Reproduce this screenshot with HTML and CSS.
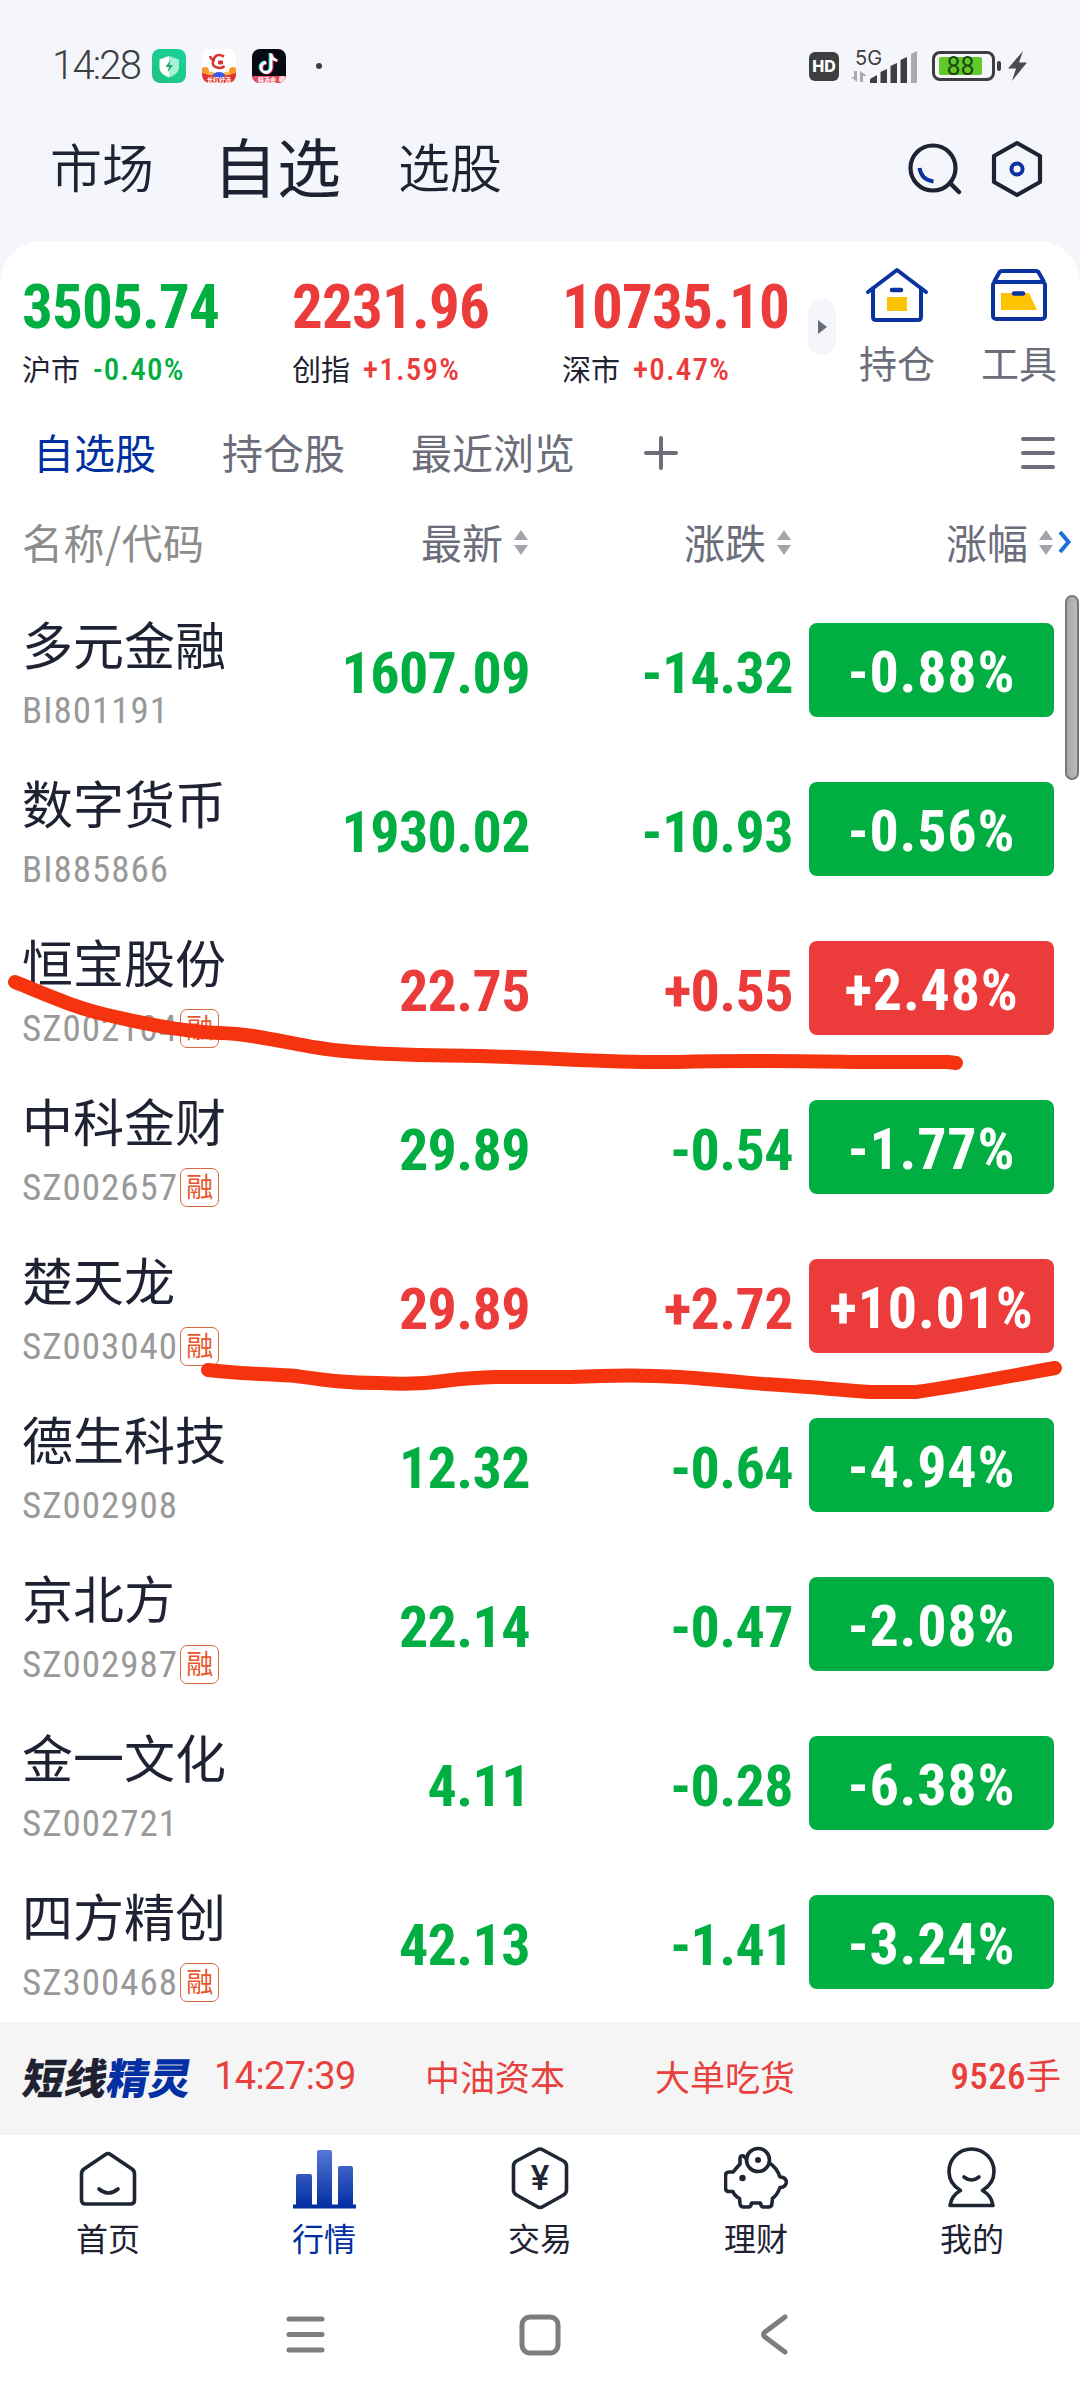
FILE: index.html
```
<!DOCTYPE html>
<html lang="zh-CN">

<head>
  <meta charset="UTF-8" />
  <meta name="viewport" content="width=device-width, initial-scale=1.0" />
  <title>自选股</title>
  <link rel="stylesheet" href="styles.css">
</head>

<body>
  <div class="status-bar">
    <span class="clock">14:28</span>
    <div class="app-icons">
      <svg width="34" height="34" viewBox="0 0 34 34">
        <defs>
          <linearGradient id="shieldBg" x1="0" y1="1" x2="1" y2="0">
            <stop offset="0" stop-color="#22c184" />
            <stop offset="1" stop-color="#17d49a" />
          </linearGradient>
        </defs>
        <rect width="34" height="34" rx="8" fill="url(#shieldBg)" />
        <path d="M17 7l10 3.500v8c0 5-5 8-10 10z" fill="#a5f3d3" />
        <path d="M17 7L7.500 10.500v8c0 5 4.500 8 9.500 10z" fill="#fff" />
        <path d="M18.500 11l-5 7h3.500l-1.500 5.500 5.500-7.500h-3.500z" fill="#1fa873" />
      </svg>
      <svg width="34" height="34" viewBox="0 0 34 34">
        <clipPath id="appClip"><rect width="34" height="34" rx="8" /></clipPath>
        <g clip-path="url(#appClip)">
          <rect width="34" height="34" fill="#fff" />
          <circle cx="3" cy="22" r="4" fill="#f79a2b" />
          <circle cx="31" cy="22" r="4" fill="#f79a2b" />
          <circle cx="9" cy="26" r="3.500" fill="#f9b64c" />
          <circle cx="25" cy="26" r="3.500" fill="#f9b64c" />
          <path d="M0 24q8 3 17 3t17-3v10H0z" fill="#e0352f" />
          <ellipse cx="17" cy="26" rx="6" ry="3" fill="#3b5be0" />
          <path d="M22 7.500q-8-4-10.500 3t4 8q4 1.500 7-1.500M8 7q1 4 5 4" fill="none" stroke="#d6372d" stroke-width="2.600" />
          <rect x="16" y="11.500" width="5" height="4" rx="1" fill="#d6372d" />
        </g>
        <text x="17" y="33" class="mini-label">长红好选</text>
      </svg>
      <svg width="34" height="34" viewBox="0 0 34 34">
        <g clip-path="url(#appClip)">
          <rect width="34" height="34" fill="#070914" />
          <g fill="none" stroke-width="2.800">
            <path d="M18 4v14a5 5 0 1 1-5-5M18 5q1 5 6 6" stroke="#25e5e0" />
            <path d="M20 5v14a5 5 0 1 1-5-5M20 6q1 5 6 6" stroke="#f2345f" />
            <path d="M19 4.500v14a5 5 0 1 1-5-5M19 5.500q1 5 6 6" stroke="#fff" />
          </g>
          <rect y="27" width="34" height="7" fill="#ea4a63" />
          <rect x="27" y="27" width="7" height="7" rx="3" fill="#ffd9cf" />
        </g>
        <text x="15" y="33" class="mini-label">精选会</text>
      </svg>
    </div>
    <span class="dot"></span>

    <div class="status-right">
      <span class="hd">HD</span>
      <svg class="signal" width="70" height="46" viewBox="0 -5 70 46">
        <text x="4" y="17" class="net">5G</text>
        <path d="M6 23v11l-6-5h3v-6zM9 34V23l7 5h-4v6z" fill="#a9abae" />
        <g fill="#3d3e40">
          <path d="M19 35v-4l7-4v8z" />
          <path d="M29.500 35V24l6.500-3v14z" />
          <path d="M39.500 35V18l6.500-3v20z" />
          <path d="M49.500 35V12l6.500-3v26z" />
        </g>
        <path d="M60 35V6l6-3v32z" fill="#a9abae" />
      </svg>
      <span class="battery"><span class="battery-fill">88</span></span>
      <span class="battery-nub"></span>
      <svg class="bolt" width="20" height="30" viewBox="0 0 20 30">
        <path d="M15 0L0 17.500h8L4 30l15-18.500h-8z" fill="#4a4b4e" />
      </svg>
    </div>
  </div>

  <header class="top-nav">
    <span class="nav-item">市场</span>
    <span class="nav-item active">自选</span>
    <span class="nav-item">选股</span>
    <div class="nav-icons">
      <svg width="56" height="60" viewBox="0 0 56 60" fill="none">
        <circle cx="26" cy="29" r="22.500" stroke="#1e2233" stroke-width="4.200" />
        <path d="M43 44l9 9" stroke="#1e2233" stroke-width="4.500" stroke-linecap="round" />
        <path d="M12.500 29q2 12 14 13.500" stroke="#0a33a0" stroke-width="4" />
      </svg>
      <svg width="56" height="60" viewBox="0 0 56 60" fill="none">
        <path d="M28 4l23 13v26L28 56 5 43V17z" stroke="#1e2233" stroke-width="4.200" stroke-linejoin="round" />
        <circle cx="28" cy="30" r="5.600" stroke="#0a33a0" stroke-width="4" />
      </svg>
    </div>
  </header>

  <main class="panel">
    <section class="indices">
      <div class="index green">
        <div class="index-value">3505.74</div>
        <div class="index-sub"><span class="index-name">沪市</span><span class="index-pct">-0.40%</span></div>
      </div>
      <div class="index red">
        <div class="index-value">2231.96</div>
        <div class="index-sub"><span class="index-name">创指</span><span class="index-pct">+1.59%</span></div>
      </div>
      <div class="index red">
        <div class="index-value">10735.10</div>
        <div class="index-sub"><span class="index-name">深市</span><span class="index-pct">+0.47%</span></div>
      </div>
      <div class="expand">
        <svg width="9" height="14" viewBox="0 0 9 14"><path d="M0 0l9 7-9 7z" fill="#6b6e7a" /></svg>
      </div>
      <div class="tool">
        <svg width="64" height="56" viewBox="0 0 64 56" fill="none">
          <path d="M3 26L32 4l29 22M8 22v29q0 3 3 3h42q3 0 3-3V22" stroke="#0a33a0" stroke-width="4" stroke-linecap="round" stroke-linejoin="round" />
          <rect x="22" y="31" width="20" height="14" fill="#ffc400" />
          <path d="M27 24h9" stroke="#0a33a0" stroke-width="4.500" stroke-linecap="round" />
        </svg>
        <span>持仓</span>
      </div>
      <div class="tool">
        <svg width="64" height="56" viewBox="0 0 64 56" fill="none">
          <rect x="6" y="16" width="52" height="37" rx="3" stroke="#0a33a0" stroke-width="4" />
          <path d="M7 16l5-9q1-2 3-2h34q2 0 3 2l5 9" stroke="#0a33a0" stroke-width="4" />
          <path d="M14 27h28l8 17H14z" fill="#ffc400" />
          <path d="M27 27.500h9" stroke="#0a33a0" stroke-width="4.500" stroke-linecap="round" />
        </svg>
        <span>工具</span>
      </div>
    </section>

    <nav class="tabs">
      <span class="tab active">自选股</span>
      <span class="tab">持仓股</span>
      <span class="tab">最近浏览</span>
      <svg class="add" width="34" height="34" viewBox="0 0 34 34">
        <path d="M2 17h30M17 2v30" stroke="#6b6e7a" stroke-width="4" stroke-linecap="round" />
      </svg>
      <svg class="menu" width="34" height="34" viewBox="0 0 34 34">
        <path d="M2 3h30M2 17h30M2 31h30" stroke="#6b6e7a" stroke-width="4" stroke-linecap="round" />
      </svg>
    </nav>

    <div class="table-head">
      <span class="th-name">名称/代码</span>
      <span class="th">最新<i class="sort"></i></span>
      <span class="th">涨跌<i class="sort"></i></span>
      <span class="th">涨幅<i class="sort"></i></span>
      <svg class="more" width="14" height="22" viewBox="0 0 14 22">
        <path d="M2 1l8.500 10L2 21" fill="none" stroke="#1b6fe0" stroke-width="4" />
      </svg>
    </div>

    <section class="stocks">
      <div class="row green">
        <div class="stock"><div class="name">多元金融</div><div class="code">BI801191</div></div>
        <div class="num">1607.09</div><div class="num">-14.32</div><div class="pct">-0.88%</div>
      </div>
      <div class="row green">
        <div class="stock"><div class="name">数字货币</div><div class="code">BI885866</div></div>
        <div class="num">1930.02</div><div class="num">-10.93</div><div class="pct">-0.56%</div>
      </div>
      <div class="row red">
        <div class="stock"><div class="name">恒宝股份</div><div class="code">SZ002104<span class="margin">融</span></div></div>
        <div class="num">22.75</div><div class="num">+0.55</div><div class="pct">+2.48%</div>
      </div>
      <div class="row green">
        <div class="stock"><div class="name">中科金财</div><div class="code">SZ002657<span class="margin">融</span></div></div>
        <div class="num">29.89</div><div class="num">-0.54</div><div class="pct">-1.77%</div>
      </div>
      <div class="row red">
        <div class="stock"><div class="name">楚天龙</div><div class="code">SZ003040<span class="margin">融</span></div></div>
        <div class="num">29.89</div><div class="num">+2.72</div><div class="pct">+10.01%</div>
      </div>
      <div class="row green">
        <div class="stock"><div class="name">德生科技</div><div class="code">SZ002908</div></div>
        <div class="num">12.32</div><div class="num">-0.64</div><div class="pct">-4.94%</div>
      </div>
      <div class="row green">
        <div class="stock"><div class="name">京北方</div><div class="code">SZ002987<span class="margin">融</span></div></div>
        <div class="num">22.14</div><div class="num">-0.47</div><div class="pct">-2.08%</div>
      </div>
      <div class="row green">
        <div class="stock"><div class="name">金一文化</div><div class="code">SZ002721</div></div>
        <div class="num">4.11</div><div class="num">-0.28</div><div class="pct">-6.38%</div>
      </div>
      <div class="row green">
        <div class="stock"><div class="name">四方精创</div><div class="code">SZ300468<span class="margin">融</span></div></div>
        <div class="num">42.13</div><div class="num">-1.41</div><div class="pct">-3.24%</div>
      </div>
      <div class="scrollbar"></div>
    </section>
  </main>

  <div class="ticker">
    <span class="ticker-logo">短线<b>精灵</b></span>
    <span class="ticker-time">14:27:39</span>
    <span class="ticker-stock">中油资本</span>
    <span class="ticker-event">大单吃货</span>
    <span class="ticker-vol"><em>9526</em>手</span>
  </div>

  <nav class="tab-bar">
    <div class="bar-item">
      <svg width="64" height="64" viewBox="0 0 64 64">
        <path d="M29.500 8.500q2.500-2 5 0L56 23q2.500 2 2.500 5v26q0 4-4 4h-45q-4 0-4-4V28q0-3 2.500-5z" />
        <path d="M23 43q9.500 8 19 0" />
      </svg>
      <span>首页</span>
    </div>
    <div class="bar-item active">
      <svg width="64" height="64" viewBox="0 0 64 64" class="solid">
        <defs>
          <linearGradient id="bars" gradientUnits="userSpaceOnUse" x1="0" y1="4" x2="0" y2="60">
            <stop offset="0" stop-color="#5577d6" />
            <stop offset="1" stop-color="#0530a3" />
          </linearGradient>
        </defs>
        <path d="M4 60V30q0-2 2-2h12q2 0 2 2v30zM25 60V6q0-2 2-2h11q2 0 2 2v54zM46 60V22q0-2 2-2h11q2 0 2 2v38z" fill="url(#bars)" />
        <rect x="1" y="58.500" width="63" height="4" fill="#0530a3" />
      </svg>
      <span>行情</span>
    </div>
    <div class="bar-item">
      <svg width="64" height="64" viewBox="0 0 64 64">
        <path d="M29 4q3-2 6 0l20.500 11q3 2 3 5v24q0 3-3 5L35 60.500q-3 2-6 0L8.500 49q-3-2-3-5V20q0-3 3-5z" />
        <text x="32" y="44" class="yuan">¥</text>
      </svg>
      <span>交易</span>
    </div>
    <div class="bar-item">
      <svg width="64" height="64" viewBox="0 0 64 64">
        <circle cx="34" cy="14" r="11.500" />
        <circle cx="34" cy="14" r="2" class="ink" />
        <circle cx="18.500" cy="32" r="2.200" class="ink" />
        <path d="M22.500 13l-3-3q-3-1-3.500 2v6L9 26H5q-3.500 0-3.500 4v12q0 3.500 3.500 3.500h4q1 4 6.500 7l.5 5q.5 3.500 3.500 3.500h5q2.500 0 3-4h9q.5 4 3 4h5q3.500 0 3.500-4l.5-4.500q5-4 7.500-11 5.500 0 6.500-5.500-1-5-6.500-5-3-9-10.500-14" />
      </svg>
      <span>理财</span>
    </div>
    <div class="bar-item">
      <svg width="64" height="64" viewBox="0 0 64 64">
        <path d="M20.500 44.500q-11.500-7-11.500-19a22.500 22.500 0 0 1 45 0Q54 37.500 42.500 44.500q9 5 10.500 15H10q1.500-10 10.500-15z" />
        <path d="M24 31q7.500 6 15 0" />
      </svg>
      <span>我的</span>
    </div>
  </nav>

  <footer class="sys-nav">
    <svg width="42" height="42" viewBox="0 0 42 42"><path d="M4 5h33M4 20.500h33M4 36h33" /></svg>
    <svg width="42" height="42" viewBox="0 0 42 42"><rect x="3" y="3" width="36" height="36" rx="8" /></svg>
    <svg width="42" height="42" viewBox="0 0 42 42"><path d="M32 3L12 18q-3 2.500 0 5l20 15" /></svg>
  </footer>

  <!-- hand-drawn marks over the list -->
  <svg class="marks" width="1080" height="2400" viewBox="0 0 1080 2400">
    <path d="M15 982C50 996 80 1010 116 1017C150 1025 185 1032 220 1033C265 1034 300 1048 344 1051C400 1056 430 1055 480 1056C560 1058 610 1063 678 1062C740 1060 790 1061 860 1062L948 1062L956 1063" />
    <path d="M208 1370C240 1374 270 1374 296 1376C325 1380 345 1383 379 1383C440 1386 440 1378 496 1377L571 1377C610 1375 650 1375 680 1377C710 1379 740 1382 764 1384C800 1386 830 1389 871 1392L916 1392C960 1386 1010 1376 1055 1368" />
  </svg>
</body>

</html>
```
FILE: styles.css
```
* {
  box-sizing: border-box;
}

body {
  margin: 0;
  width: 1080px;
  height: 2400px;
  position: relative;
  display: flex;
  flex-direction: column;
  overflow: hidden;
  background: #f5f6fb;
  color: #1e2233;
  font-family: "Noto Sans CJK SC", sans-serif;
  font-weight: 400;
  line-height: 1;
}

svg {
  display: block;
  flex: none;
}

.green {
  --tone: #00ae42;
}

.red {
  --tone: #ec3b3b;
}

/* status bar */
.status-bar {
  display: flex;
  align-items: center;
  height: 96px;
  padding: 36px 52px 0 52px;
}

.clock {
  width: 100px;
  font-family: Roboto, sans-serif;
  font-size: 40px;
  font-weight: 350;
  letter-spacing: -1.8px;
  color: #3d3e40;
}

.app-icons {
  display: flex;
  gap: 16px;
}

.mini-label {
  font-size: 6px;
  font-weight: 700;
  fill: #fff;
  text-anchor: middle;
}

.dot {
  width: 6px;
  height: 6px;
  margin-left: 30px;
  border-radius: 50%;
  background: #3d3e40;
}

.status-right {
  display: flex;
  align-items: center;
  margin-left: auto;
}

.hd {
  width: 30px;
  height: 29px;
  margin-right: 12px;
  border-radius: 6px;
  background: #3d3e40;
  color: #fff;
  font: 800 16px/29px Inter, sans-serif;
  text-align: center;
}

.net {
  font-family: Inter, sans-serif;
  font-size: 20px;
  font-weight: 400;
  fill: #3d3e40;
}

.battery {
  width: 63px;
  height: 30px;
  margin-left: 11px;
  padding: 3px 4px;
  border: 3px solid #3d3e40;
  border-radius: 8px;
}

.battery-fill {
  display: block;
  width: 43px;
  height: 18px;
  border-radius: 2px;
  background: #62c928;
  color: #1d4a12;
  font: 400 25px/19px Roboto, sans-serif;
  text-align: center;
}

.battery-nub {
  width: 4px;
  height: 10px;
  margin: 0 7px 0 2px;
  border-radius: 2px;
  background: #3d3e40;
}

/* top navigation */
.top-nav {
  display: flex;
  align-items: center;
  height: 145px;
  padding: 0 35px 0 50px;
}

.nav-item {
  margin: -6px 60px 0 0;
  font-size: 52px;
  font-weight: 350;
}

.nav-item.active {
  margin: -9px 57px 0 -1px;
  font-size: 64px;
  font-weight: 400;
}

.nav-icons {
  display: flex;
  gap: 26px;
  margin-left: auto;
}

/* white panel */
.panel {
  height: 1781px;
  border-radius: 42px 42px 0 0;
  background: #fff;
}

.indices {
  display: flex;
  height: 159px;
  padding-left: 22px;
}

.index {
  flex: none;
  width: 270px;
  padding-top: 36px;
  color: var(--tone);
}

.index-value {
  font-family: "Roboto Condensed", sans-serif;
  font-size: 61px;
  font-weight: 700;
  letter-spacing: -0.8px;
}

.index-sub {
  display: flex;
  align-items: center;
  gap: 13px;
  margin-top: 14px;
}

.index-name {
  font-size: 29px;
  color: #1e2233;
}

.index-pct {
  margin-top: 2px;
  font-family: "Roboto Condensed", sans-serif;
  font-size: 31px;
  font-weight: 500;
  letter-spacing: 1.2px;
}

.expand {
  display: flex;
  flex: none;
  align-items: center;
  justify-content: center;
  width: 28px;
  height: 56px;
  margin: 58px 24px 0 -24px;
  border-radius: 14px;
  background: #f4f6fb;
}

.tool {
  display: flex;
  flex: none;
  flex-direction: column;
  align-items: center;
  gap: 21px;
  width: 74px;
  margin-right: 48px;
  padding-top: 25px;
  color: #6b6e7a;
  font-size: 38px;
  white-space: nowrap;
}

.tool:last-child {
  margin-right: 0;
}

/* list tabs */
.tabs {
  display: flex;
  align-items: center;
  height: 108px;
  padding: 0 25px 2px 33px;
  color: #6b6e7a;
}

.tab {
  margin: -3px 66px 0 0;
  font-size: 41px;
}

.tab.active {
  color: #002f9f;
}

.add {
  margin-left: 3px;
}

.menu {
  margin-left: auto;
}

/* table header */
.table-head,
.row {
  display: grid;
  grid-template-columns: 251px 255px 263px 245px;
  padding-left: 22px;
}

.table-head {
  position: relative;
  align-items: center;
  height: 82px;
  padding-bottom: 15px;
  color: #6b6e7a;
  font-size: 41px;
}

.th-name {
  color: #8c8c8c;
  letter-spacing: 0.5px;
}

.th {
  display: flex;
  align-items: center;
  justify-content: flex-end;
  gap: 11px;
}

.th:nth-child(4) {
  margin-right: -17px;
}

.sort {
  display: flex;
  flex-direction: column;
  gap: 5px;
  margin-top: 1px;
}

.sort::before,
.sort::after {
  content: "";
  border: 7.500px solid transparent;
}

.sort::before {
  border-top: 0;
  border-bottom: 10px solid #a3a5ac;
}

.sort::after {
  border-bottom: 0;
  border-top: 10px solid #a3a5ac;
}

.more {
  position: absolute;
  right: 8px;
  top: 23px;
}

/* stock rows */
.stocks {
  position: relative;
}

.row {
  height: 159px;
  color: var(--tone);
}

.stock {
  padding-top: 28px;
}

.name {
  height: 57px;
  color: #1e2233;
  font-size: 51px;
}

.code {
  display: flex;
  align-items: center;
  height: 39px;
  margin-top: 16px;
  gap: 2px;
  color: #999;
  font-family: "Roboto Condensed", sans-serif;
  font-size: 37px;
  font-weight: 400;
  letter-spacing: 1px;
}

.margin {
  width: 39px;
  height: 39px;
  border: 1.500px solid #d9683f;
  border-radius: 7px;
  color: #e8552a;
  font: 400 27px/33px "Noto Sans CJK SC", sans-serif;
  text-align: center;
  letter-spacing: 0;
}

.num,
.pct {
  font-family: "Roboto Condensed", sans-serif;
  font-size: 58px;
  font-weight: 680;
  text-align: right;
}

.num {
  margin-right: -2px;
  padding-top: 54px;
  letter-spacing: -0.6px;
}

.pct {
  width: 245px;
  height: 94px;
  margin: 33px 0 0 18px;
  border-radius: 8px;
  background: var(--tone);
  color: #fff;
  line-height: 99px;
  text-align: center;
  letter-spacing: 0.8px;
}

.scrollbar {
  position: absolute;
  top: 5px;
  right: 1px;
  width: 14px;
  height: 185px;
  border: 2px solid #777;
  border-radius: 7px;
  background: linear-gradient(90deg, #a8a8a8, #bcbcbc);
}

/* ticker */
.ticker {
  display: flex;
  align-items: center;
  height: 112px;
  padding: 0 19px 4px 24px;
  border-bottom: 1px solid #e9e9e9;
  background: #f5f5f5;
  color: #e8403c;
  font-size: 35px;
}

.ticker-logo {
  width: 190px;
  color: #1e2233;
  font-size: 42px;
  font-weight: 900;
  transform: skewX(-10deg);
  transform-origin: left center;
}

.ticker-logo b {
  color: #0530a3;
  font-weight: 900;
}

.ticker-time {
  width: 211px;
  font-family: Roboto, sans-serif;
  font-size: 38px;
  letter-spacing: -0.6px;
}

.ticker-stock {
  width: 230px;
}

.ticker-vol {
  margin-left: auto;
}

.ticker-vol em {
  font: 500 37px/1 "Roboto Condensed", sans-serif;
  letter-spacing: 0.4px;
}

/* bottom tab bar */
.tab-bar {
  display: flex;
  height: 136px;
  background: #fff;
}

.bar-item {
  display: flex;
  flex-direction: column;
  align-items: center;
  gap: 11px;
  width: 216px;
  padding-top: 12px;
  font-size: 32px;
}

.bar-item.active {
  color: #002f9f;
}

.bar-item svg {
  fill: none;
  stroke: #1e2634;
  stroke-width: 3.600;
  stroke-linecap: round;
  stroke-linejoin: round;
}

.bar-item svg.solid {
  stroke: none;
}

.bar-item .ink {
  fill: #1e2634;
  stroke-width: 2;
}

.bar-item .yuan {
  fill: #1e2634;
  stroke: none;
  font: 500 35px Roboto, sans-serif;
  text-anchor: middle;
}

/* android navigation */
.sys-nav {
  display: flex;
  justify-content: center;
  gap: 192px;
  flex: 1;
  padding: 44px 0 0 0;
  background: #fff;
}

.sys-nav svg {
  fill: none;
  stroke: #7d7d7d;
  stroke-width: 5;
  stroke-linecap: round;
}

.marks {
  position: absolute;
  left: 0;
  top: 0;
  fill: none;
  stroke: #f6330f;
  stroke-width: 14;
  stroke-linecap: round;
  stroke-linejoin: round;
}
```
